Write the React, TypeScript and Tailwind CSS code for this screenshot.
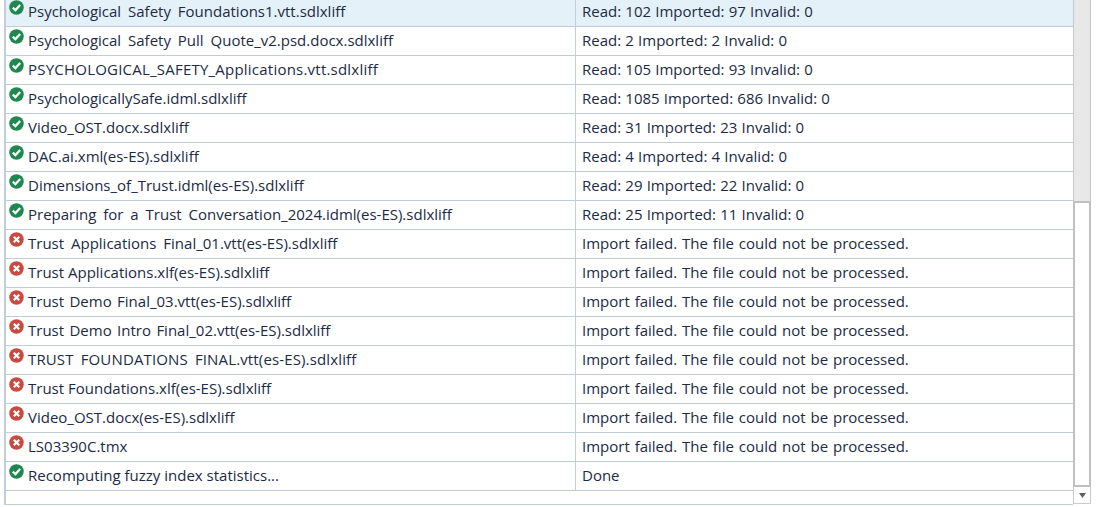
const failed = "Import failed. The file could not be processed.";

const rows = [
  { ok: true, name: "Psychological Safety Foundations1.vtt.sdlxliff", result: "Read: 102 Imported: 97 Invalid: 0", spacing: "[word-spacing:3px]" },
  { ok: true, name: "Psychological Safety Pull Quote_v2.psd.docx.sdlxliff", result: "Read: 2 Imported: 2 Invalid: 0", spacing: "[word-spacing:3px]" },
  { ok: true, name: "PSYCHOLOGICAL_SAFETY_Applications.vtt.sdlxliff", result: "Read: 105 Imported: 93 Invalid: 0", spacing: "tracking-[0.22px]" },
  { ok: true, name: "PsychologicallySafe.idml.sdlxliff", result: "Read: 1085 Imported: 686 Invalid: 0", spacing: "" },
  { ok: true, name: "Video_OST.docx.sdlxliff", result: "Read: 31 Imported: 23 Invalid: 0", spacing: "" },
  { ok: true, name: "DAC.ai.xml(es-ES).sdlxliff", result: "Read: 4 Imported: 4 Invalid: 0", spacing: "" },
  { ok: true, name: "Dimensions_of_Trust.idml(es-ES).sdlxliff", result: "Read: 29 Imported: 22 Invalid: 0", spacing: "" },
  { ok: true, name: "Preparing for a Trust Conversation_2024.idml(es-ES).sdlxliff", result: "Read: 25 Imported: 11 Invalid: 0", spacing: "[word-spacing:3px]" },
  { ok: false, name: "Trust Applications Final_01.vtt(es-ES).sdlxliff", result: failed, spacing: "[word-spacing:3px]" },
  { ok: false, name: "Trust Applications.xlf(es-ES).sdlxliff", result: failed, spacing: "" },
  { ok: false, name: "Trust Demo Final_03.vtt(es-ES).sdlxliff", result: failed, spacing: "[word-spacing:1.5px]" },
  { ok: false, name: "Trust Demo Intro Final_02.vtt(es-ES).sdlxliff", result: failed, spacing: "[word-spacing:1.5px]" },
  { ok: false, name: "TRUST FOUNDATIONS FINAL.vtt(es-ES).sdlxliff", result: failed, spacing: "[word-spacing:3px] tracking-[0.14px]" },
  { ok: false, name: "Trust Foundations.xlf(es-ES).sdlxliff", result: failed, spacing: "" },
  { ok: false, name: "Video_OST.docx(es-ES).sdlxliff", result: failed, spacing: "" },
  { ok: false, name: "LS03390C.tmx", result: failed, spacing: "" },
  { ok: true, name: "Recomputing fuzzy index statistics...", result: "Done", spacing: "" },
];

function StatusIcon({ ok }: { ok: boolean }) {
  return (
    <svg width="15" height="15" viewBox="0 0 15 15" className="shrink-0 ml-[3px] mt-[2px]">
      <circle cx="7.5" cy="7.5" r="7.25" fill={ok ? "#1e8850" : "#c94b40"} />
      {ok ? (
        <path d="M3.8 7.6 L6.4 10.1 L11.2 5" fill="none" stroke="#fff" strokeWidth="2.2" />
      ) : (
        <path d="M4.8 4.8 L10.2 10.2 M10.2 4.8 L4.8 10.2" fill="none" stroke="#fff" strokeWidth="2.2" />
      )}
    </svg>
  );
}

export default function App() {
  return (
    <div className="w-[1096px] h-[507px] overflow-hidden bg-white flex pl-[4px] pr-[5px] pb-[2px] font-['Open_Sans',sans-serif] text-[15px] text-[#1b2b45]">
      {/* Log list */}
      <div className="flex-1 min-w-0 h-[505px] overflow-hidden border-l-2 border-b border-l-[#c3cfd8] border-b-[#bfced6]">
        <div className="-mt-[2px]">
          {rows.map((row, i) => (
            <div key={i} className={`flex h-[29px] border-b border-[#bfced6] ${i === 0 ? "bg-[#e5f1f9]" : ""}`}>
              <div className="w-[570px] shrink-0 flex border-r border-[#c3cfd8]">
                <StatusIcon ok={row.ok} />
                <span className={`ml-[4px] mt-[3px] leading-[20px] whitespace-nowrap ${row.spacing}`}>{row.name}</span>
              </div>
              <span className={`ml-[6px] mt-[3px] leading-[20px] whitespace-nowrap ${row.ok ? "[word-spacing:0.3px]" : "[word-spacing:1px]"}`}>{row.result}</span>
            </div>
          ))}
        </div>
      </div>

      {/* Scrollbar */}
      <div className="w-[18px] h-[505px] shrink-0 flex flex-col bg-white">
        <div className="h-[201px] bg-[#e8e8e8] border-x border-[#c4c8ca]" />
        <div className="h-[286px] bg-white border-2 border-[#c0c0c0]" />
        <div className="h-[17px] flex items-center justify-center border-x border-b border-[#c4ccd0]">
          <svg width="7" height="5" viewBox="0 0 7 5">
            <path d="M0 0 H7 L3.5 5 Z" fill="#606060" />
          </svg>
        </div>
      </div>
    </div>
  );
}
